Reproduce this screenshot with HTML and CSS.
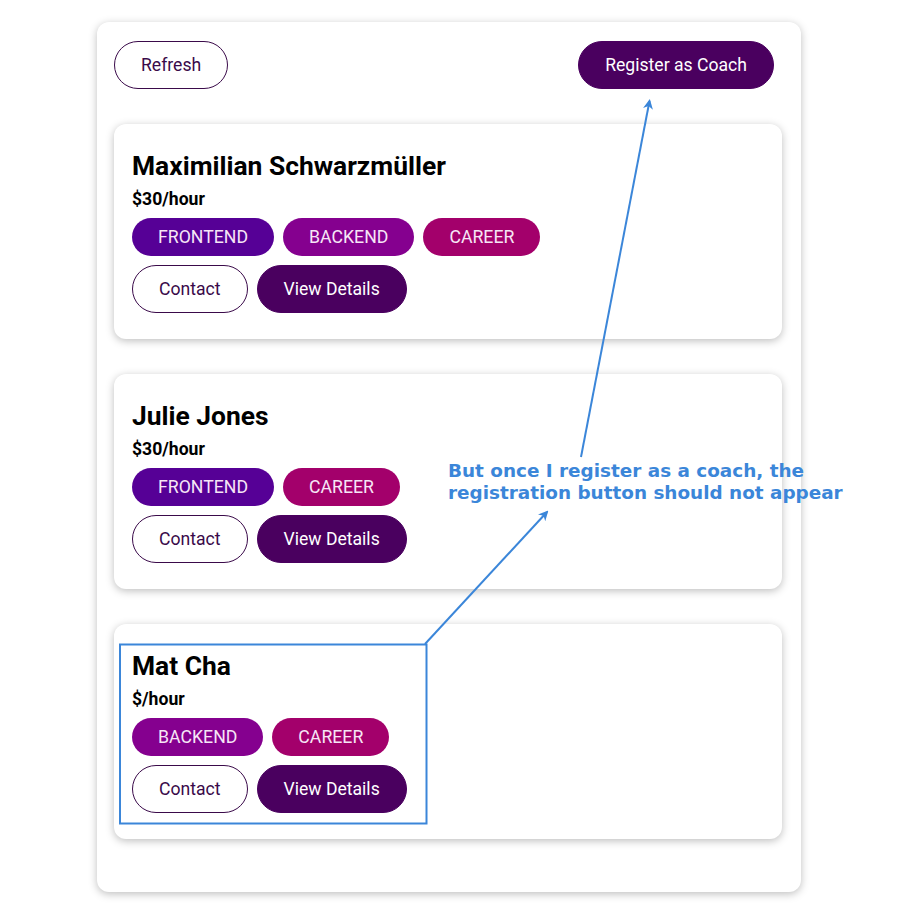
FILE: index.html
```html
<!DOCTYPE html>
<html lang="en">
<head>
<meta charset="utf-8">
<title>Coaches</title>
<link rel="stylesheet" href="styles.css">
</head>
<body>
<section class="page">
  <div class="controls">
    <button class="btn btn-flat">Refresh</button>
    <button class="btn btn-solid">Register as Coach</button>
  </div>
  <ul class="coach-list">
    <li class="coach">
      <h3 class="coach-name">Maximilian Schwarzmüller</h3>
      <h4 class="coach-rate">$30/hour</h4>
      <div class="badges">
        <span class="badge frontend">FRONTEND</span>
        <span class="badge backend">BACKEND</span>
        <span class="badge career">CAREER</span>
      </div>
      <div class="actions">
        <button class="btn btn-flat">Contact</button>
        <button class="btn btn-solid">View Details</button>
      </div>
    </li>
    <li class="coach">
      <h3 class="coach-name">Julie Jones</h3>
      <h4 class="coach-rate">$30/hour</h4>
      <div class="badges">
        <span class="badge frontend">FRONTEND</span>
        <span class="badge career">CAREER</span>
      </div>
      <div class="actions">
        <button class="btn btn-flat">Contact</button>
        <button class="btn btn-solid">View Details</button>
      </div>
    </li>
    <li class="coach">
      <h3 class="coach-name">Mat Cha</h3>
      <h4 class="coach-rate">$/hour</h4>
      <div class="badges">
        <span class="badge backend">BACKEND</span>
        <span class="badge career">CAREER</span>
      </div>
      <div class="actions">
        <button class="btn btn-flat">Contact</button>
        <button class="btn btn-solid">View Details</button>
      </div>
    </li>
  </ul>
</section>

<svg class="annotation" width="901" height="908" viewBox="0 0 901 908" xmlns="http://www.w3.org/2000/svg">
  <defs>
    <marker id="head" viewBox="0 0 10 10" refX="8" refY="5" markerWidth="5" markerHeight="5" orient="auto-start-reverse">
      <path d="M0,0 L10,5 L0,10 L3,5 z" fill="#3b86d9"/>
    </marker>
  </defs>
  <rect x="120" y="644.5" width="306.5" height="179" fill="none" stroke="#3b86d9" stroke-width="2"/>
  <line x1="581" y1="457" x2="649.5" y2="101" stroke="#3b86d9" stroke-width="2" marker-end="url(#head)"/>
  <line x1="425" y1="644" x2="547" y2="512" stroke="#3b86d9" stroke-width="2" marker-end="url(#head)"/>
</svg>
<div class="note">But once I register as a coach, the<br>registration button should not appear</div>
</body>
</html>
```

FILE: styles.css
```css
* {
  box-sizing: border-box;
}

html, body {
  margin: 0;
  padding: 0;
  background: #ffffff;
}

body {
  font-family: Roboto, "Noto Sans", sans-serif;
  color: #000;
  position: relative;
  width: 901px;
  height: 908px;
  overflow: hidden;
}

.page {
  width: 704px;
  margin: 22px 0 0 97px;
  padding: 19px 19px 53px 17px;
  border-radius: 12px;
  background: #fff;
  box-shadow: 0 2px 8px rgba(0, 0, 0, 0.26);
}

.controls {
  display: flex;
  justify-content: space-between;
  align-items: center;
  padding-right: 8px;
}

.btn {
  font-family: Roboto, sans-serif;
  font-size: 17.6px;
  height: 48px;
  padding: 2px 26px 0;
  border-radius: 30px;
  cursor: pointer;
  line-height: 1;
}

.btn-flat {
  background: #fff;
  color: #3a0a4a;
  border: 1px solid #3a0a4a;
}

.btn-solid {
  background: #4a005f;
  color: #fff;
  border: 1px solid #4a005f;
}

.coach-list {
  list-style: none;
  margin: 35px 0 0;
  padding: 0;
  display: flex;
  flex-direction: column;
  gap: 35px;
}

.coach {
  width: 668px;
  padding: 26px 18px 26px 18px;
  border-radius: 12px;
  background: #fff;
  box-shadow: 0 2px 8px rgba(0, 0, 0, 0.26);
}

.coach-name {
  margin: 0;
  font-size: 26.4px;
  line-height: 30px;
  font-weight: 700;
  color: #000;
  position: relative;
  top: 1px;
}

.coach-rate {
  margin: 8px 0 0;
  font-size: 17.6px;
  line-height: 20px;
  font-weight: 700;
  color: #000;
  position: relative;
  top: 1px;
}

.badges {
  display: flex;
  gap: 9px;
  margin-top: 10px;
}

.badge {
  display: inline-flex;
  align-items: center;
  height: 38px;
  padding: 0 26px;
  border-radius: 19px;
  font-size: 17.7px;
  color: #f6e6f6;
}

.frontend {
  background: #560096;
}

.backend {
  background: #85008f;
}

.career {
  background: #a3006b;
}

.actions {
  display: flex;
  gap: 9px;
  margin-top: 9px;
}

.annotation {
  position: absolute;
  left: 0;
  top: 0;
  pointer-events: none;
}

.note {
  position: absolute;
  left: 448px;
  top: 460px;
  font-family: "DejaVu Sans", sans-serif;
  font-weight: 700;
  font-size: 18.4px;
  line-height: 22px;
  color: #3b86d9;
  white-space: nowrap;
}
```
